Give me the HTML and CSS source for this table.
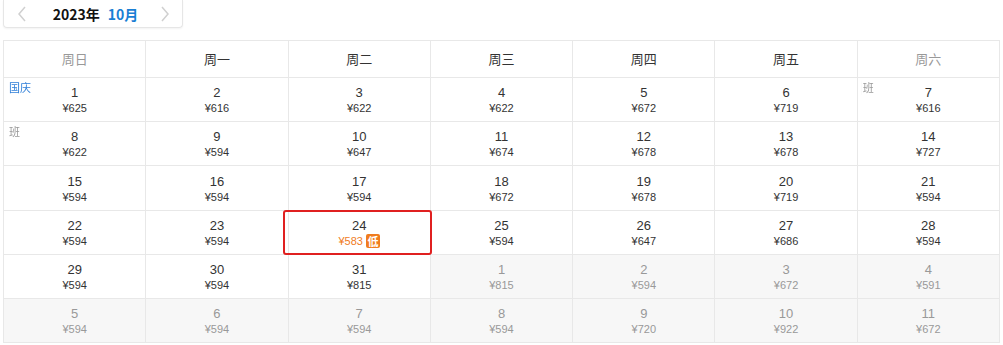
FILE: index.html
```html
<!DOCTYPE html>
<html lang="zh">
<head>
<meta charset="utf-8">
<link rel="stylesheet" href="styles.css">
</head>
<body>
<div class="nav">
  <svg class="chev" width="10" height="16" viewBox="0 0 10 16"><path d="M8 1 L2 8 L8 15" fill="none" stroke="#d0d0d0" stroke-width="1.5"/></svg>
  <span class="title"><span class="year">2023年</span><span class="month">10月</span></span>
  <svg class="chev" width="10" height="16" viewBox="0 0 10 16"><path d="M2 1 L8 8 L2 15" fill="none" stroke="#d0d0d0" stroke-width="1.5"/></svg>
</div>
<div class="cal">
  <div class="hd weekend">周日</div><div class="hd">周一</div><div class="hd">周二</div><div class="hd">周三</div><div class="hd">周四</div><div class="hd">周五</div><div class="hd weekend">周六</div>

  <div class="cell"><span class="tag tag-blue">国庆</span><div class="d">1</div><div class="p">¥625</div></div>
  <div class="cell"><div class="d">2</div><div class="p">¥616</div></div>
  <div class="cell"><div class="d">3</div><div class="p">¥622</div></div>
  <div class="cell"><div class="d">4</div><div class="p">¥622</div></div>
  <div class="cell"><div class="d">5</div><div class="p">¥672</div></div>
  <div class="cell"><div class="d">6</div><div class="p">¥719</div></div>
  <div class="cell"><span class="tag tag-grey">班</span><div class="d">7</div><div class="p">¥616</div></div>

  <div class="cell"><span class="tag tag-grey">班</span><div class="d">8</div><div class="p">¥622</div></div>
  <div class="cell"><div class="d">9</div><div class="p">¥594</div></div>
  <div class="cell"><div class="d">10</div><div class="p">¥647</div></div>
  <div class="cell"><div class="d">11</div><div class="p">¥674</div></div>
  <div class="cell"><div class="d">12</div><div class="p">¥678</div></div>
  <div class="cell"><div class="d">13</div><div class="p">¥678</div></div>
  <div class="cell"><div class="d">14</div><div class="p">¥727</div></div>

  <div class="cell"><div class="d">15</div><div class="p">¥594</div></div>
  <div class="cell"><div class="d">16</div><div class="p">¥594</div></div>
  <div class="cell"><div class="d">17</div><div class="p">¥594</div></div>
  <div class="cell"><div class="d">18</div><div class="p">¥672</div></div>
  <div class="cell"><div class="d">19</div><div class="p">¥678</div></div>
  <div class="cell"><div class="d">20</div><div class="p">¥719</div></div>
  <div class="cell"><div class="d">21</div><div class="p">¥594</div></div>

  <div class="cell"><div class="d">22</div><div class="p">¥594</div></div>
  <div class="cell"><div class="d">23</div><div class="p">¥594</div></div>
  <div class="cell selected"><div class="d">24</div><div class="p low">¥583<span class="badge">低</span></div></div>
  <div class="cell"><div class="d">25</div><div class="p">¥594</div></div>
  <div class="cell"><div class="d">26</div><div class="p">¥647</div></div>
  <div class="cell"><div class="d">27</div><div class="p">¥686</div></div>
  <div class="cell"><div class="d">28</div><div class="p">¥594</div></div>

  <div class="cell"><div class="d">29</div><div class="p">¥594</div></div>
  <div class="cell"><div class="d">30</div><div class="p">¥594</div></div>
  <div class="cell"><div class="d">31</div><div class="p">¥815</div></div>
  <div class="cell off"><div class="d">1</div><div class="p">¥815</div></div>
  <div class="cell off"><div class="d">2</div><div class="p">¥594</div></div>
  <div class="cell off"><div class="d">3</div><div class="p">¥672</div></div>
  <div class="cell off"><div class="d">4</div><div class="p">¥591</div></div>

  <div class="cell off"><div class="d">5</div><div class="p">¥594</div></div>
  <div class="cell off"><div class="d">6</div><div class="p">¥594</div></div>
  <div class="cell off"><div class="d">7</div><div class="p">¥594</div></div>
  <div class="cell off"><div class="d">8</div><div class="p">¥594</div></div>
  <div class="cell off"><div class="d">9</div><div class="p">¥720</div></div>
  <div class="cell off"><div class="d">10</div><div class="p">¥922</div></div>
  <div class="cell off"><div class="d">11</div><div class="p">¥672</div></div>
</div>
</body>
</html>
```
FILE: styles.css
```css
html, body {
  margin: 0;
  padding: 0;
  background: #fff;
}
body {
  font-family: "Liberation Sans", "Noto Sans CJK SC", sans-serif;
  color: #333;
}
.nav {
  margin-left: 3px;
  height: 27px;
  border: 1px solid #e6e6e6;
  border-top: none;
  border-radius: 0 0 4px 4px;
  box-shadow: 0 1px 2px rgba(0,0,0,0.05);
  display: flex;
  align-items: center;
  justify-content: space-between;
  padding: 0 12px 0 13px;
  box-sizing: content-box;
  width: 153px;
}
.chev { display: block; }
.title {
  display: flex;
  align-items: center;
  gap: 8px;
  font-weight: bold;
  font-size: 14px;
  font-family: "Noto Sans CJK SC", sans-serif;
  margin-left: 4px;
}
.year { color: #111; }
.month { color: #1a7fd4; }
.cal {
  margin: 12px 0 0 3px;
  width: 997px;
  box-sizing: border-box;
  border-top: 1px solid #e8e8e8;
  border-left: 1px solid #e8e8e8;
  display: grid;
  grid-template-columns: repeat(7, 1fr);
  grid-template-rows: 37px 44px 44px 45px 44px 44px 44px;
}
.hd, .cell {
  border-right: 1px solid #e8e8e8;
  border-bottom: 1px solid #e8e8e8;
}
.hd {
  display: flex;
  align-items: center;
  justify-content: center;
  font-family: "Noto Sans CJK SC", sans-serif;
  font-size: 13px;
  color: #333;
  padding-bottom: 2px;
}
.hd.weekend { color: #999; }
.cell {
  position: relative;
  display: flex;
  flex-direction: column;
  align-items: center;
  justify-content: center;
  padding-top: 1px;
}
.cell.off {
  background: #f7f7f7;
  color: #999;
}
.d {
  font-size: 13px;
  line-height: 16px;
}
.p {
  font-size: 11px;
  line-height: 14px;
  display: flex;
  align-items: center;
}
.p.low { color: #f07c1e; }
.badge {
  display: inline-block;
  margin-left: 3px;
  width: 14px;
  height: 14px;
  line-height: 14px;
  text-align: center;
  background: #f07c1e;
  color: #fff;
  font-size: 11px;
  font-weight: bold;
  border-radius: 2px;
  font-family: "Noto Sans CJK SC", sans-serif;
}
.selected::after {
  content: "";
  position: absolute;
  left: -6px;
  right: -2px;
  top: -1px;
  bottom: -1px;
  border: 2px solid #e02020;
  border-radius: 3px;
}
.tag {
  position: absolute;
  left: 4px;
  top: 2px;
  font-size: 11px;
  line-height: 14px;
  padding: 0 7px 1px 1px;
  font-family: "Noto Sans CJK SC", sans-serif;
  background: #fff;
  clip-path: polygon(0 0, 100% 0, 82% 100%, 0 100%);
  filter: drop-shadow(0 1px 1px rgba(0,0,0,0.15));
}
.tag-blue { color: #2f7fd8; }
.tag-grey { color: #999; }
```
